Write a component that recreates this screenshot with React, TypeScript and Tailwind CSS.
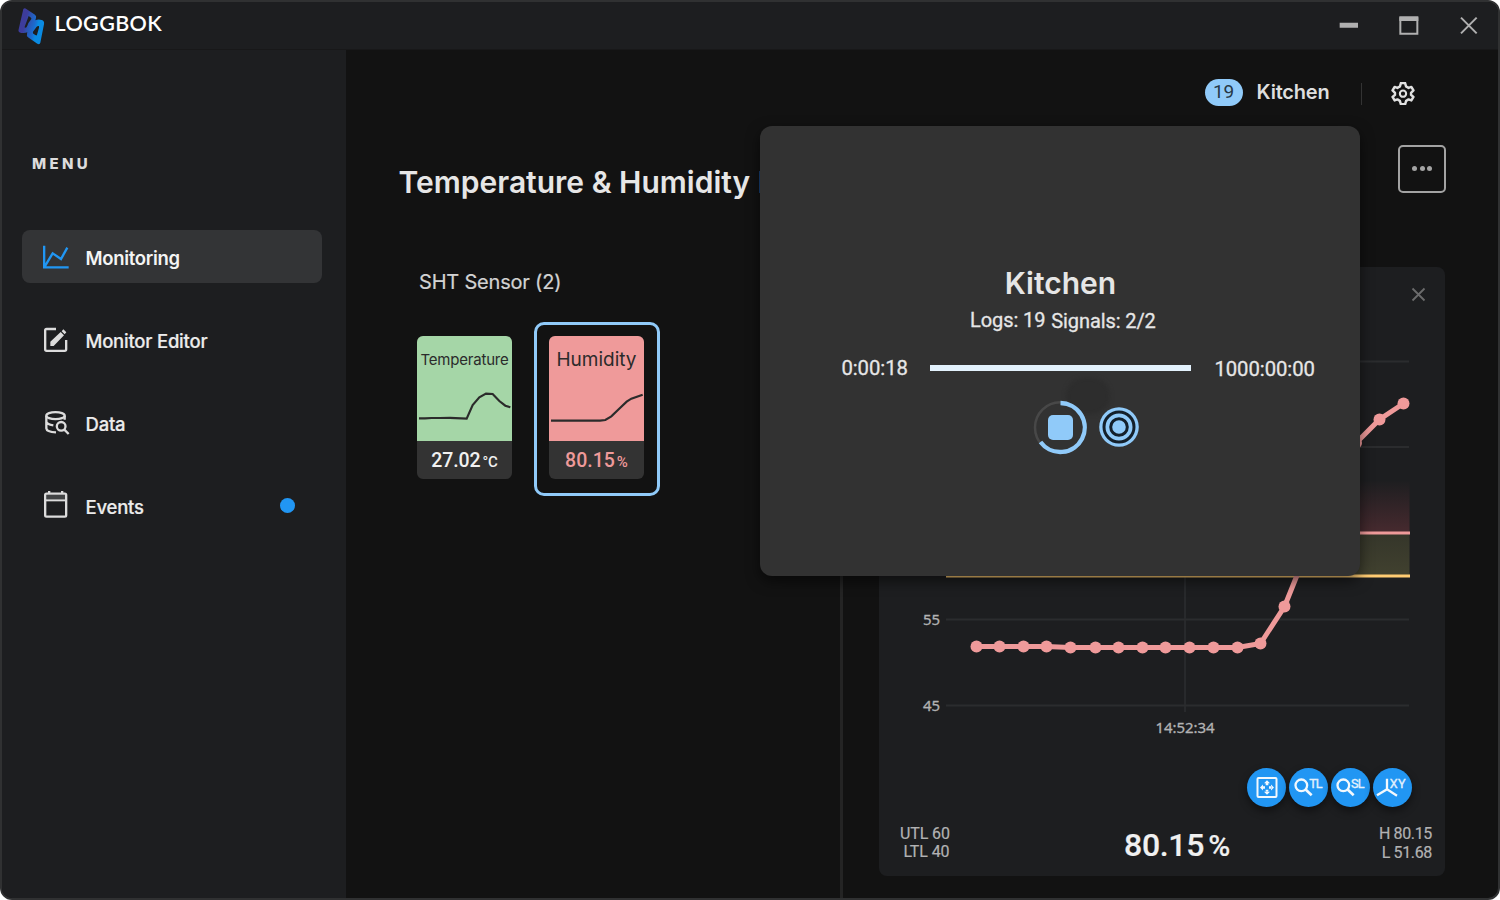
import type { ReactNode } from "react";

const points: [number, number][] = [
  [976.5, 646.5], [999.5, 646.5], [1023.5, 646.5], [1046.5, 646.5], [1070.5, 647.5], [1095.5, 647.5],
  [1118.5, 647.5], [1142.5, 647.5], [1165.5, 647.5], [1189.5, 647.5], [1213.5, 647.5], [1237.5, 647.5],
  [1260.5, 643.5], [1284.5, 606.5], [1308, 548], [1332, 488], [1356, 443], [1379.5, 419.5], [1403.5, 403.5],
];

function Logo() {
  return (
    <svg viewBox="48 15 96 120" className="h-10 w-8 shrink-0">
      <defs>
        <linearGradient id="brand" gradientUnits="userSpaceOnUse" x1="55" y1="60" x2="133" y2="80">
          <stop offset="0.25" stopColor="#3d3c9c" />
          <stop offset="0.4" stopColor="#2b55b4" />
          <stop offset="0.62" stopColor="#1b6ccf" />
          <stop offset="0.75" stopColor="#0a8be2" />
        </linearGradient>
      </defs>
      <path
        fill="url(#brand)"
        d="M70 24Q74 20 79 24L105 41Q110 45 108 51L106 58Q114 54 125 57Q134 59 132 70L121 125Q119 132 112 128L84 109Q79 105 81 98L82 94Q76 97 64 96Q53 94 56 85Z"
      />
      <path
        fill="#1d1e20"
        d="M86 45 93 50Q96 53 92 57Q83 67 82 74Q80 80 76 80Q73 80 74 77ZM110 77Q113 74 116 75Q118 76 117 80L111 101Q110 105 106 102L100 98Q98 96 99 92Z"
      />
    </svg>
  );
}

function NavItem({ icon, label, active, dot }: { icon: ReactNode; label: string; active?: boolean; dot?: boolean }) {
  return (
    <div
      className={
        active
          ? "flex h-[53px] items-center rounded-lg bg-[#333436] pl-[18px] pr-[27px]"
          : "flex h-[53px] items-center pl-[18px] pr-[27px]"
      }
    >
      {icon}
      <span
        className={
          active
            ? "ml-[13.500px] mt-[4px] text-[18.5px] font-semibold tracking-[-0.3px] text-[#f4f4f4]"
            : "ml-[13.500px] mt-[4px] text-[18.5px] font-medium tracking-[-0.22px] text-[#ececec] [-webkit-text-stroke:0.2px]"
        }
      >
        {label}
      </span>
      {dot && <span className="ml-auto h-[15px] w-[15px] rounded-full bg-[#2196f3]" />}
    </div>
  );
}

function Sidebar() {
  return (
    <aside className="w-[344px] shrink-0 bg-[#1d1e20] pt-[104px] pr-6 pl-5">
      <div className="pt-px pl-[10px] text-[15px] leading-[18px] font-extrabold tracking-[3.3px] text-[#dcdcdc]">MENU</div>
      <nav className="mt-[57px] flex flex-col gap-[30px]">
        <NavItem
          active
          label="Monitoring"
          icon={
            <svg viewBox="120 725 96 90" className="h-[30px] w-8" fill="none" stroke="#2196f3" strokeWidth="7">
              <path d="M132.500 736V801H206M134 799 158 759 183 776 202 742" />
            </svg>
          }
        />
        <NavItem
          label="Monitor Editor"
          icon={
            <svg viewBox="120 75 96 90" className="h-[30px] w-8" fill="none" stroke="#dcdcdc" strokeWidth="7">
              <path d="M168 87H140Q135.500 87 135.500 91V148Q135.500 152.500 140 152.500H194Q198.500 152.500 198.500 148V120" />
              <path d="M151 138V125L182 96 192 106 161 138ZM185 94 190 88 199 97 194 103Z" fill="#dcdcdc" stroke="none" />
            </svg>
          }
        />
        <NavItem
          label="Data"
          icon={
            <svg viewBox="120 325 96 90" className="h-[30px] w-8" fill="none" stroke="#dcdcdc" strokeWidth="7">
              <ellipse cx="166.500" cy="348" rx="27.500" ry="10.500" />
              <path d="M139 348V386Q140 397 168 398M139 366Q140 374 160 377M194 348V360" />
              <circle cx="183.500" cy="380" r="13" />
              <path d="M193 390 206 403" />
            </svg>
          }
        />
        <NavItem
          dot
          label="Events"
          icon={
            <svg viewBox="120 571 96 90" className="mb-px h-[30px] w-8" fill="none" stroke="#dcdcdc" strokeWidth="7">
              <rect x="135.500" y="582" width="63" height="69" rx="4" />
              <path d="M135 602H199" strokeWidth="6" />
              <path d="M147.500 574V583M186.500 574V583" />
              <path d="M139 592H195" stroke="#8a8b8d" strokeWidth="12" opacity=".35" />
            </svg>
          }
        />
      </nav>
    </aside>
  );
}

function SensorTile({ name, value, unit, red }: { name: string; value: string; unit: string; red?: boolean }) {
  return (
    <div className="mb-[3px] flex h-[143px] w-[95px] shrink-0 flex-col overflow-hidden rounded-md bg-[#333333]">
      <div className={red ? "flex h-[105px] flex-col bg-[#ef9a9a]" : "flex h-[105px] flex-col bg-[#a5d6a7]"}>
        <div
          className={
            red
              ? "mt-[9px] h-7 text-center text-[19px] leading-[30px] whitespace-nowrap tracking-[0px] text-[#2b2b2b]"
              : "mt-[9px] h-7 text-center text-[15px] leading-[29px] whitespace-nowrap tracking-[-0.2px] text-[#2b2b2b]"
          }
        >
          {name}
        </div>
        <svg viewBox="81 669 285 204" className="h-[68px] w-[95px]" fill="none" stroke="#2b2b2b" strokeWidth="6.500">
          {red ? (
            <path transform="translate(-396 0)" d="M483 812H630L646 810 664 799 690 774 710 755 724 746 758 734" />
          ) : (
            <path d="M87 805H105L125 804H150L180 803.500 230 806 248 765 268 742 288 731 308 732 328 753 346 767 361 772" />
          )}
        </svg>
      </div>
      <div
        className={
          red
            ? "flex h-[38px] items-baseline justify-center gap-[2px] pt-[5px] font-['Roboto'] text-[19.5px] leading-[29px] font-medium text-[#ef9a9a]"
            : "flex h-[38px] items-baseline justify-center gap-[2px] pt-[5px] font-['Roboto'] text-[19.5px] leading-[29px] font-medium tracking-[-0.1px] text-[#f1f1f1]"
        }
      >
        <span>{value}</span>
        <span className="text-[15px]">{unit}</span>
      </div>
    </div>
  );
}

function Chart() {
  return (
    <svg viewBox="879 267 566 490" className="h-[490px] w-full shrink-0">
      <defs>
        <linearGradient id="upper" x1="0" y1="0" x2="0" y2="1">
          <stop offset="0" stopColor="#ef5a6a" stopOpacity="0" />
          <stop offset="1" stopColor="#ef5a6a" stopOpacity=".2" />
        </linearGradient>
        <linearGradient id="lower" x1="0" y1="0" x2="0" y2="1">
          <stop offset="0" stopColor="#35362a" />
          <stop offset="1" stopColor="#41412f" />
        </linearGradient>
      </defs>
      <path d="M946 361.500H1409M946 447H1409M946 619.500H1409M946 705.500H1409M1185 361V712" stroke="#2b2c2e" strokeWidth="1.800" />
      <rect x="946" y="480" width="463.500" height="53" fill="url(#upper)" />
      <rect x="946" y="534" width="463.500" height="42" fill="url(#lower)" />
      <path d="M946 533H1410" stroke="#ef9a9a" strokeWidth="3" />
      <path d="M946 576H1410" stroke="#ffcc73" strokeWidth="3" />
      <polyline points={points.map((p) => p.join(",")).join(" ")} fill="none" stroke="#ef9a9a" strokeWidth="5" />
      {points.map(([x, y]) => (
        <circle key={x} cx={x} cy={y} r="6" fill="#ef9a9a" />
      ))}
      <path d="M1412.500 288.500 1424.500 300.500M1424.500 288.500 1412.500 300.500" stroke="#6b6b6c" strokeWidth="1.800" />
      <g fill="#b2b2b3" stroke="#b2b2b3" strokeWidth="0.300" fontFamily="Noto Sans, sans-serif" fontSize="15">
        <text x="923" y="625" textLength="17">55</text>
        <text x="923" y="711" textLength="17">45</text>
        <text x="1185" y="733" textAnchor="middle" textLength="59">14:52:34</text>
      </g>
    </svg>
  );
}

function Tool({ children, view }: { children: ReactNode; view: string }) {
  return (
    <button className="h-[39px] w-[39px] rounded-full bg-[#2196f3] shadow-[0_4px_8px_rgba(0,0,0,0.45)]">
      <svg viewBox={view} className="h-[39px] w-[39px]" fill="none" stroke="#f2f8fd" strokeWidth="6" fontSize="38">
        {children}
      </svg>
    </button>
  );
}

function ChartCard() {
  return (
    <section className="mt-[74px] flex h-[609px] w-[566px] flex-col rounded-lg bg-[#1d1e20]">
      <Chart />
      <div className="mt-[11px] flex justify-end gap-[3px] pr-[33.500px]">
        <Tool view="200 54 117 117">
          <rect x="231.500" y="84" width="57" height="57" rx="3" />
          <path
            d="M260 91 269 100H251ZM260 134 269 125H251ZM239 112.500 248 103.500V121.500ZM281 112.500 272 103.500V121.500ZM256 99H264V106H256ZM256 119H264V126H256ZM247 108.500H254V116.500H247ZM266 108.500H273V116.500H266Z"
            fill="#f2f8fd"
            stroke="none"
          />
        </Tool>
        <Tool view="326 54 117 117">
          <circle cx="363" cy="106" r="17.500" strokeWidth="7" />
          <path d="M375 118 394 136" strokeWidth="8" />
          <text x="387" y="113" fill="#e4f1fd" stroke="#e4f1fd" strokeWidth="1" textLength="40" className="font-['Roboto']">TL</text>
        </Tool>
        <Tool view="452 54 117 117">
          <circle cx="489" cy="106" r="17.500" strokeWidth="7" />
          <path d="M501 118 520 136" strokeWidth="8" />
          <text x="512" y="113" fill="#e4f1fd" stroke="#e4f1fd" strokeWidth="1" textLength="41" className="font-['Roboto']">SL</text>
        </Tool>
        <Tool view="578 54 117 117">
          <path d="M620 86V118L590 136M620 118 650 137" strokeWidth="7" />
          <text x="628" y="113" fill="#e4f1fd" stroke="#e4f1fd" strokeWidth="1" textLength="48" className="font-['Roboto']">XY</text>
        </Tool>
      </div>
      <div className="mt-[17px] flex items-start pr-[13px] pl-[21px] font-['Roboto'] text-[16px] leading-[18px] text-[#b2b2b3] [-webkit-text-stroke:0.2px]">
        <div className="w-[49.500px] pt-px text-right tracking-[-0.1px] whitespace-nowrap">
          <div>UTL 60</div>
          <div>LTL 40</div>
        </div>
        <div className="mt-[3px] ml-[174.500px] flex items-baseline gap-[4px] text-[32px] leading-[36px] font-medium tracking-[-0.3px] text-[#f0f0f0]">
          <span>80.15</span>
          <span className="text-[30px]">%</span>
        </div>
        <div className="ml-auto text-right leading-[19px] tracking-[-0.35px] whitespace-nowrap">
          <div>H 80.15</div>
          <div>L 51.68</div>
        </div>
      </div>
    </section>
  );
}

function RecordingPanel() {
  return (
    <div className="absolute top-[126px] left-[760.400px] flex h-[450px] w-[600px] flex-col items-center rounded-xl bg-[#323232] pt-[137px] font-['Roboto'] text-[#e6e6e6] shadow-[0_5px_14px_rgba(0,0,0,0.55)]">
      <h2 className="font-['Inter'] text-[30px] leading-10 font-semibold">Kitchen</h2>
      <div className="mt-[5px] ml-[5px] flex gap-[6px] text-[20px] leading-6 tracking-[-0.1px] [-webkit-text-stroke:0.3px]">
        <span>Logs: 19</span>
        <span className="pt-px">Signals: 2/2</span>
      </div>
      <div className="mt-[21px] ml-[35px] flex w-[474px] items-center self-start pl-[46px] text-[20.3px] leading-6 tracking-[-0.05px] whitespace-nowrap [-webkit-text-stroke:0.3px]">
        <span className="w-[89px] shrink-0 pt-px">0:00:18</span>
        <span className="mt-px h-[6px] w-[261px] shrink-0 bg-[#e3f2fd]" />
        <span className="ml-[23px] pt-[3px]">1000:00:00</span>
      </div>
      <span className="absolute top-[252px] left-[306px] h-9 w-11 rounded-full bg-[#2b2b2b]/70 blur-[2px]" />
      <svg viewBox="1030 397 114 60" className="relative mt-[16px] ml-[53px] h-[60px] w-[114px]" fill="none">
        <circle cx="1060.300" cy="427.500" r="25.300" stroke="#484848" strokeWidth="2.500" />
        <path d="M1060.500 403A24.500 24.500 0 1 1 1040.500 442" stroke="#90caf9" strokeWidth="4.300" />
        <rect x="1048" y="415" width="25" height="25" rx="5" fill="#90caf9" />
        <circle cx="1119" cy="427" r="19.800" fill="#90caf9" />
        <circle cx="1119" cy="427" r="15" stroke="#14202b" strokeWidth="3" />
        <circle cx="1119" cy="427" r="8.300" stroke="#14202b" strokeWidth="3" />
      </svg>
    </div>
  );
}

export default function App() {
  return (
    <div className="relative h-[900px] w-[1500px] bg-white font-['Inter']">
      <div className="flex h-full flex-col overflow-hidden rounded-xl border-2 border-[#303132] bg-[#121212]">
        <header className="flex h-12 shrink-0 items-center border-b border-[#181819] bg-[#1d1e20] pr-[17.500px] pl-[14px]">
          <Logo />
          <span className="mb-[4px] ml-[6.500px] font-['Lato'] text-[21.5px] font-semibold tracking-[0.4px] text-white">LOGGBOK</span>
          <svg viewBox="470 40 432 72" className="mb-px ml-auto h-6 w-36" fill="none" stroke="#b0b0b0">
            <path d="M478 77H533" strokeWidth="15" />
            <path d="M660 53V102H711V53" strokeWidth="6" />
            <path d="M657 57H714" strokeWidth="14" />
            <path d="M842 54 889 101M889 54 842 101" strokeWidth="6" />
          </svg>
        </header>
        <div className="flex min-h-0 flex-1">
          <Sidebar />
          <main className="flex flex-1 flex-col">
            <div className="flex h-[84px] shrink-0 items-center justify-end pr-[83px]">
              <span className="flex h-[27px] w-[38px] items-center justify-center rounded-full bg-[#90caf9] font-['Roboto'] text-[19px] text-[#263847]">19</span>
              <span className="ml-[14px] text-[20px] font-semibold tracking-[-0.2px] text-[#dedede]">Kitchen</span>
              <span className="mt-1 ml-[31px] h-[22px] w-px bg-[#333333]" />
              <svg viewBox="636 249 66 66" className="mt-[3px] ml-[29.500px] h-[23px] w-[24px]" fill="none" stroke="#e0e0e0" strokeWidth="7" strokeLinejoin="round">
                <path d="M663 252H675L678 262 685 266 693 263 699 273 692 280V286L699 292 693 302 685 299 678 303 675 313H663L660 303 653 299 645 302 639 292 646 286V280L639 273 645 263 653 266 660 262Z" />
                <circle cx="669" cy="282.500" r="9" strokeWidth="6" />
              </svg>
            </div>
            <div className="mt-[11px] flex h-12 shrink-0 items-center justify-between pr-[52px] pl-[52.600px]">
              <h1 className="mt-[26px] text-[30px] leading-9 font-semibold whitespace-nowrap text-[#e6e6e6]">Temperature &amp; Humidity Monitor</h1>
              <button className="flex h-12 w-12 items-center justify-center gap-[2.500px] rounded-[5px] border-2 border-[#a3a3a3] pb-px">
                <span className="h-[5px] w-[5px] rounded-full bg-[#a3a3a3]" />
                <span className="h-[5px] w-[5px] rounded-full bg-[#a3a3a3]" />
                <span className="h-[5px] w-[5px] rounded-full bg-[#a3a3a3]" />
              </button>
            </div>
            <div className="flex min-h-0 flex-1">
              <section className="w-[497px] shrink-0 border-r-3 border-[#242424] pt-[76px] pl-[71px]">
                <h2 className="pl-[2px] text-[20px] leading-[26px] tracking-[-0.2px] text-[#d2d2d2] [-webkit-text-stroke:0.2px]">SHT Sensor (2)</h2>
                <div className="mt-[27px] flex items-center gap-[22px]">
                  <SensorTile name="Temperature" value="27.02" unit="°C" />
                  <div className="flex h-[174px] w-[126px] items-center rounded-[10px] border-3 border-[#90caf9] pl-[12px]">
                    <SensorTile red name="Humidity" value="80.15" unit="%" />
                  </div>
                </div>
              </section>
              <div className="pl-[36px]">
                <ChartCard />
              </div>
            </div>
          </main>
        </div>
      </div>
      <RecordingPanel />
    </div>
  );
}
